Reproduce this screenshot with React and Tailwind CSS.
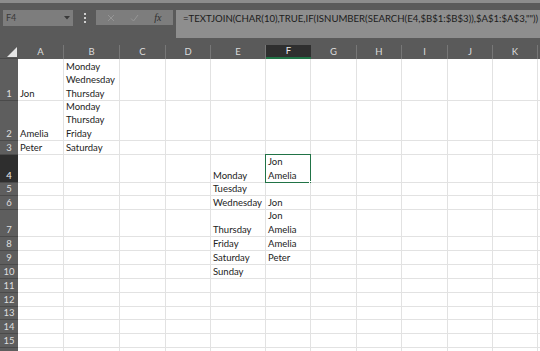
import React from "react";

const cols = ["A", "B", "C", "D", "E", "F", "G", "H", "I", "J", "K", ""];
const rowHeights = [42, 40, 14, 28, 13, 14, 27, 14, 14, 14, 14, 14, 13, 14, 14];

const data = {
  "0-0": "Jon",
  "0-1": "Monday\nWednesday\nThursday",
  "1-0": "Amelia",
  "1-1": "Monday\nThursday\nFriday",
  "2-0": "Peter",
  "2-1": "Saturday",
  "3-4": "Monday",
  "3-5": "Jon\nAmelia",
  "4-4": "Tuesday",
  "5-4": "Wednesday",
  "5-5": "Jon",
  "6-4": "Thursday",
  "6-5": "Jon\nAmelia",
  "7-4": "Friday",
  "7-5": "Amelia",
  "8-4": "Saturday",
  "8-5": "Peter",
  "9-4": "Sunday",
};

export default function App() {
  return (
    <div
      className="w-[540px] h-[351px] overflow-hidden bg-[#5a5a5a] flex flex-col"
      style={{ fontFamily: "Lato, 'Liberation Sans', sans-serif" }}
    >
      {/* top strip */}
      <div className="h-[3px] bg-[#8c8c8c] shrink-0" />
      {/* formula area */}
      <div className="h-[42px] shrink-0 flex items-start pt-[7px] pl-[3px]">
        <div className="w-[70px] h-[16px] bg-[#7d7d7d] flex items-center justify-between px-[3px] text-[9px] text-[#3a3a3a]">
          <span>F4</span>
          <svg width="6" height="4" viewBox="0 0 6 4">
            <path d="M0 0 L6 0 L3 3.5 Z" fill="#3a3a3a" />
          </svg>
        </div>
        <div className="w-[23px] h-[16px] flex flex-col items-center justify-center gap-[2px]">
          <div className="w-[2px] h-[2px] bg-[#cfcfcf]" />
          <div className="w-[2px] h-[2px] bg-[#cfcfcf]" />
          <div className="w-[2px] h-[2px] bg-[#cfcfcf]" />
        </div>
        <div className="w-[77px] h-[15px] bg-[#7d7d7d] flex items-center justify-around px-[4px]">
          <svg width="8" height="8" viewBox="0 0 8 8">
            <path d="M1 1 L7 7 M7 1 L1 7" stroke="#959595" strokeWidth="1" />
          </svg>
          <svg width="9" height="8" viewBox="0 0 9 8">
            <path d="M1 4.5 L3.5 7 L8 1" stroke="#959595" strokeWidth="1" fill="none" />
          </svg>
          <span
            className="text-[10px] italic text-[#2e2e2e] leading-none"
            style={{ fontFamily: "'Liberation Serif', serif" }}
          >
            fx
          </span>
        </div>
        <div className="ml-[3px] flex-1 h-[28px] bg-[#8e8e8e] pl-[7px] pt-[2px] text-[9.6px] text-[#1c1c1c] whitespace-nowrap leading-[14px]">
          =TEXTJOIN(CHAR(10),TRUE,IF(ISNUMBER(SEARCH(E4,$B$1:$B$3)),$A$1:$A$3,""))
        </div>
      </div>
      {/* grid */}
      <div
        className="grid flex-1 grid-cols-[18px_46px_56px_46px_45px_55px_45px_46px_45px_46px_45px_45px_1fr] grid-rows-[14px_42px_40px_14px_28px_13px_14px_27px_14px_14px_14px_14px_14px_13px_14px_14px_1fr]"
      >
        {/* header row */}
        <div className="bg-[#5a5a5a] relative border-b border-[#4a4a4a]">
          <svg className="absolute right-[1px] bottom-[1px]" width="10" height="10" viewBox="0 0 10 10">
            <path d="M10 0 L10 10 L0 10 Z" fill="#e6e6e6" />
          </svg>
        </div>
        {cols.map((c, i) => (
          <div
            key={c + i}
            className={
              i === 5
                ? "bg-[#2f2f2f] border-b-2 border-b-[#217346] flex items-center justify-center text-[9.5px] text-[#e8e8e8]"
                : "bg-[#5a5a5a] border-r border-r-[#777777] flex items-center justify-center text-[9.5px] text-[#dcdcdc]"
            }
          >
            {c}
          </div>
        ))}
        {rowHeights.map((h, r) => (
          <React.Fragment key={r}>
            <div
              className={
                r === 3
                  ? "bg-[#2e2e2e] border-b border-[#4a4a4a] flex items-end justify-center text-[9.5px] text-[#f0f0f0] leading-[13px]"
                  : "bg-[#5e5e5e] border-b border-[#4a4a4a] flex items-end justify-center text-[9.5px] text-[#dedede] leading-[13px]"
              }
            >
              {r + 1}
            </div>
            {cols.map((c, ci) => {
              const v = data[r + "-" + ci];
              const selected = r === 3 && ci === 5;
              return (
                <div
                  key={ci}
                  className="relative bg-white border-r border-b border-[#e2e2e2] flex items-end pl-[2px] text-[9.5px] text-[#222222] leading-[13.5px] whitespace-pre-line overflow-visible"
                >
                  {v}
                  {selected && (
                    <div className="absolute left-[-1px] top-[-1px] right-[-1px] bottom-[-1px] border-[1.5px] border-[#217346]">
                      <div className="absolute right-[-3px] bottom-[-3px] w-[4px] h-[4px] bg-[#217346] border border-white" />
                    </div>
                  )}
                </div>
              );
            })}
          </React.Fragment>
        ))}
        {/* filler row */}
        <div className="bg-[#5e5e5e]" />
        {cols.map((c, ci) => (
          <div key={"f" + ci} className="bg-white border-r border-[#e2e2e2]" />
        ))}
      </div>
    </div>
  );
}
